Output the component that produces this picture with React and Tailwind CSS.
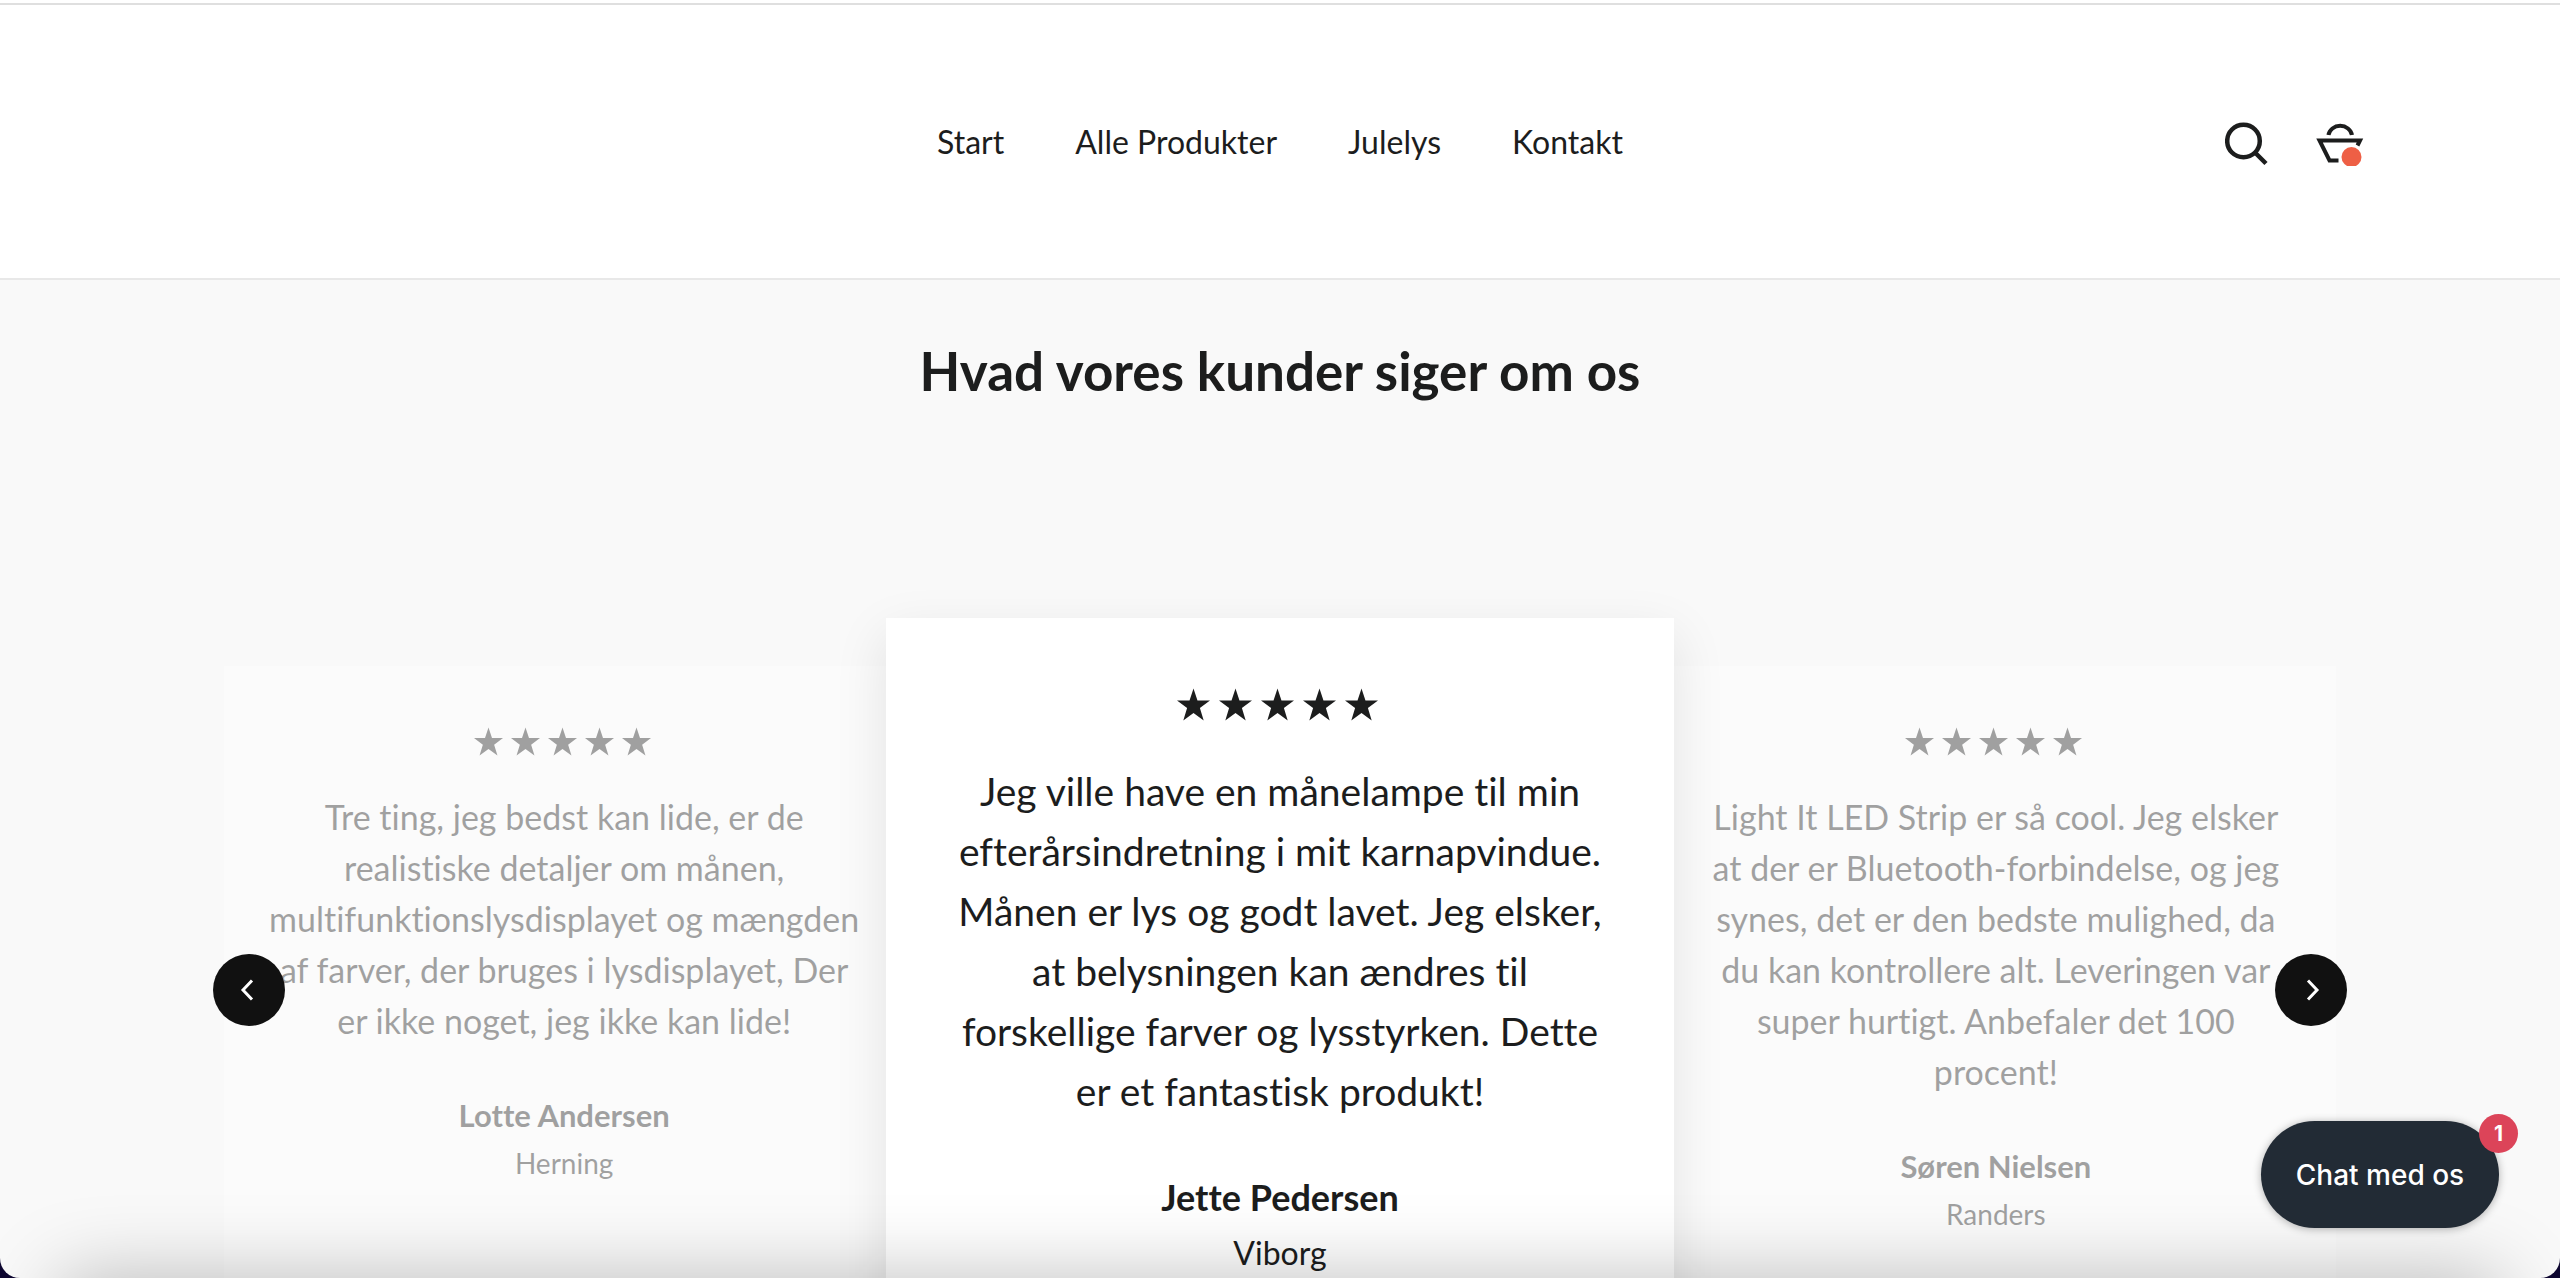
const links = ['Start', 'Alle Produkter', 'Julelys', 'Kontakt'];

const reviews = [
  {
    name: 'Lotte Andersen',
    city: 'Herning',
    text: `Tre ting, jeg bedst kan lide, er de
realistiske detaljer om månen,
multifunktionslysdisplayet og mængden
af farver, der bruges i lysdisplayet, Der
er ikke noget, jeg ikke kan lide!`,
  },
  {
    name: 'Jette Pedersen',
    city: 'Viborg',
    active: true,
    text: `Jeg ville have en månelampe til min
efterårsindretning i mit karnapvindue.
Månen er lys og godt lavet. Jeg elsker,
at belysningen kan ændres til
forskellige farver og lysstyrken. Dette
er et fantastisk produkt!`,
  },
  {
    name: 'Søren Nielsen',
    city: 'Randers',
    text: `Light It LED Strip er så cool. Jeg elsker
at der er Bluetooth-forbindelse, og jeg
synes, det er den bedste mulighed, da
du kan kontrollere alt. Leveringen var
super hurtigt. Anbefaler det 100
procent!`,
  },
];

function SearchIcon() {
  return (
    <svg className="w-[44px] h-[44px]" viewBox="0 0 44 44" fill="none" stroke="#1c1d1d" strokeWidth="4.5">
      <circle cx="18.500" cy="19" r="16.300" />
      <path d="M30 30.500 41 41.500" />
    </svg>
  );
}

function BasketIcon() {
  return (
    <svg className="w-[48px] h-[44px]" viewBox="0 0 48 44" fill="none" stroke="#1c1d1d" strokeWidth="4">
      <path d="M12.500 13a11.800 10.500 0 0 1 23.400 0" />
      <path d="M22.500 38.500H13.500L3.500 18.500H44L41.500 23.500" />
      <circle cx="35.500" cy="35" r="10" fill="#ee5f45" stroke="none" />
    </svg>
  );
}

function Chevron({ next }) {
  return (
    <svg className="h-[22px] w-[14px]" viewBox="0 0 14 22" fill="none" stroke="currentColor" strokeWidth="3">
      <path d={next ? 'M2 1.500 11 11 2 20.500' : 'M12 1.500 3 11 12 20.500'} />
    </svg>
  );
}

function Stars({ active }) {
  return (
    <div className={active ? 'flex justify-center gap-[9px] pr-1' : 'flex justify-center gap-[8px] pr-1'} role="img" aria-label="5 ud af 5 stjerner">
      {[1, 2, 3, 4, 5].map((n) => (
        <svg key={n} className={active ? 'w-[33px] h-[33px]' : 'w-[29px] h-[29px]'} viewBox="0 0 34 33" fill="currentColor">
          <path d="M17 0 21.100 12.400H34L23.600 20.200 27.500 33 17 25.200 6.500 33 10.400 20.200 0 12.400H12.900Z" />
        </svg>
      ))}
    </div>
  );
}

function ReviewCard({ review }) {
  if (review.active) {
    return (
      <article className="relative z-10 flex-[787] -mx-[18px] min-h-[720px] bg-white pt-[70px] text-center shadow-[0_18px_50px_rgba(0,0,0,0.1)]">
        <Stars active />
        <p className="mt-[40px] text-[39px] leading-[60px] whitespace-pre">{review.text}</p>
        <h3 className="mt-[48px] text-[36px] leading-[56px] font-bold">{review.name}</h3>
        <p className="text-[32px] leading-[56px]">{review.city}</p>
      </article>
    );
  }
  return (
    <article className="flex-[680] mt-12 min-h-[672px] bg-white pt-[61px] text-center opacity-40">
      <Stars />
      <p className="mt-[35px] text-[34px] leading-[51px] whitespace-pre">{review.text}</p>
      <h3 className="mt-[45px] text-[31px] leading-[48px] font-bold">{review.name}</h3>
      <p className="text-[28px] leading-[48px]">{review.city}</p>
    </article>
  );
}

export default function App() {
  return (
    <div className="h-screen bg-[#0d0630]">
      <div className="relative flex h-full flex-col overflow-hidden rounded-b-[20px] bg-[#f9f9f9] font-['Futura_PT',Lato,sans-serif] text-[#1c1d1d] [font-variant-ligatures:no-common-ligatures]">
        <div className="h-[5px] shrink-0 border-b-2 border-[#dfdfdf] bg-white" />
        <header className="grid h-[275px] shrink-0 grid-cols-[1fr_auto_1fr] items-center border-b-2 border-[#e8e8e8] bg-white">
          <nav className="col-start-2 flex gap-[71px] text-[32px] leading-[48px]">
            {links.map((link) => (
              <a key={link} href="#">{link}</a>
            ))}
          </nav>
          <div className="flex items-center justify-end gap-[47px] pt-1 pr-[196px]">
            <button aria-label="Søg"><SearchIcon /></button>
            <button aria-label="Kurv"><BasketIcon /></button>
          </div>
        </header>

        <main className="px-[8.75%] pt-[56px]">
          <h2 className="text-center text-[53px] leading-[70px] font-bold">Hvad vores kunder siger om os</h2>
          <div className="relative mt-[212px] flex">
            {reviews.map((review) => (
              <ReviewCard key={review.name} review={review} />
            ))}
            <button aria-label="Forrige" className="absolute top-[336px] -left-[11px] z-20 flex size-[72px] items-center justify-center rounded-full bg-[#111] pr-1 text-white">
              <Chevron />
            </button>
            <button aria-label="Næste" className="absolute top-[336px] -right-[11px] z-20 flex size-[72px] items-center justify-center rounded-full bg-[#111] pl-1 text-white">
              <Chevron next />
            </button>
          </div>
        </main>

        {/* shade along the bottom edge of the window */}
        <div className="pointer-events-none absolute inset-x-[60px] top-full z-20 h-40 shadow-[0_0_80px_rgba(0,0,0,0.26)]" />

        <button className="absolute right-[61px] bottom-[50px] z-30 h-[107px] w-[238px] rounded-full bg-[#222b35] font-[Inter,sans-serif] text-[28px] font-medium text-white shadow-[0_1px_8px_rgba(0,0,0,0.3)]">
          Chat med os
          <span className="absolute -top-[7px] -right-[19px] flex size-[39px] items-center justify-center rounded-full bg-[#dc4459] text-[21px] font-bold">1</span>
        </button>
      </div>
    </div>
  );
}
